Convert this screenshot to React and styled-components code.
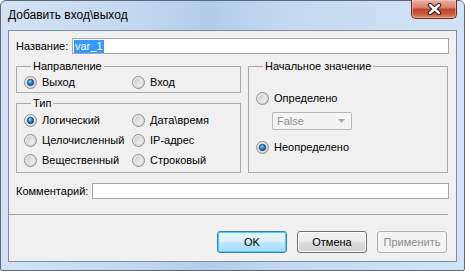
import React from 'react';
import styled, { createGlobalStyle } from 'styled-components';

const GlobalStyle = createGlobalStyle`
    html, body {
        margin: 0;
        padding: 0;
        background: #ffffff;
    }
    body {
        font-family: "Liberation Sans", Arial, sans-serif;
        font-size: 11px;
        color: #000000;
    }
`;

const Window = styled.div`
    box-sizing: border-box;
    width: 465px;
    height: 271px;
    display: flex;
    flex-direction: column;
    padding: 0 7px 8px 7px;
    border: 1px solid #5b6b7c;
    border-radius: 6px 6px 2px 2px;
    background: linear-gradient(90deg, #d3e3f4 0%, #c2d7ef 30%, #b2cce9 45%, #c4d9f0 62%, #d2e3f4 100%);
`;

const TitleBar = styled.div`
    height: 29px;
    display: flex;
    justify-content: space-between;
    flex-shrink: 0;
`;

const Title = styled.div`
    font-family: "Liberation Sans", Arial, sans-serif;
    font-size: 12px;
    line-height: 14px;
    padding-top: 7px;
    color: #000000;
`;

const CloseButton = styled.div`
    box-sizing: border-box;
    width: 46px;
    height: 19px;
    margin-top: -1px;
    display: grid;
    place-items: center;
    border: 1px solid #6d2a1e;
    border-top: none;
    border-radius: 0 0 5px 5px;
    background: linear-gradient(180deg, #eab0a3 0%, #d9806b 42%, #c4442b 52%, #c9533a 75%, #dc8a6a 100%);
    box-shadow: inset 0 0 0 1px rgba(255, 220, 210, 0.45);
`;

const Client = styled.div`
    flex: 1;
    box-sizing: border-box;
    display: flex;
    flex-direction: column;
    padding: 7px 7px 8px 7px;
    border: 1px solid #7b8ea4;
    background: #f0f0f0;
`;

const FieldRow = styled.div`
    display: flex;
    align-items: center;
    height: 16px;
    margin-top: ${(p) => p.$top || 0}px;
`;

const Label = styled.div`
    width: ${(p) => p.$width}px;
    flex-shrink: 0;
    line-height: 13px;
    white-space: nowrap;
`;

const TextInput = styled.div`
    flex: 1;
    box-sizing: border-box;
    height: 16px;
    display: flex;
    align-items: center;
    padding-left: 1px;
    border: 1px solid #a5a7aa;
    background: #ffffff;
`;

const Selected = styled.span`
    background: #3399ff;
    color: #ffffff;
    line-height: 13px;
    padding: 0 1px;
`;

const Groups = styled.div`
    display: grid;
    grid-template-columns: 225px 200px;
    column-gap: 7px;
    margin-top: 6px;
`;

const Column = styled.div`
    display: flex;
    flex-direction: column;
    gap: 4px;
`;

const GroupBox = styled.fieldset`
    margin: 0;
    min-width: 0;
    padding: ${(p) => p.$pad};
    border: 1px solid #a9a9a9;
    border-radius: 0;
`;

const Legend = styled.legend`
    margin-left: 7px;
    padding: 0 2px;
    line-height: 13px;
`;

const RadioGrid = styled.div`
    display: grid;
    grid-template-columns: 108px 1fr;
    row-gap: 7px;
`;

const RadioItem = styled.label`
    display: flex;
    align-items: center;
    gap: 5px;
    height: 13px;
    line-height: 13px;
    white-space: nowrap;
    margin-top: ${(p) => p.$top || 0}px;
`;

const Combo = styled.div`
    box-sizing: border-box;
    width: 80px;
    height: 18px;
    margin: 7px 0 0 16px;
    display: flex;
    align-items: center;
    justify-content: space-between;
    padding: 0 6px 0 4px;
    border: 1px solid #b8b8b8;
    border-radius: 2px;
    background: #f4f4f4;
    color: #8d8d8d;
`;

const Separator = styled.div`
    height: 1px;
    margin: 15px 1px 0 -7px;
    background: #a0a0a0;
`;

const ButtonBar = styled.div`
    display: flex;
    justify-content: flex-end;
    gap: 10px;
    margin-top: 16px;
    padding-right: 2px;
`;

const Button = styled.div`
    box-sizing: border-box;
    width: 70px;
    height: 22px;
    display: grid;
    place-items: center;
    border-radius: 3px;
    border: 1px solid ${(p) => (p.$variant === 'default' ? '#3c7fb1' : p.$variant === 'disabled' ? '#adb2b5' : '#707070')};
    color: ${(p) => (p.$variant === 'disabled' ? '#8c8c8c' : '#000000')};
    background: ${(p) =>
        p.$variant === 'default'
            ? 'linear-gradient(180deg, #eaf6fd 0%, #d9f0fc 48%, #bee6fd 52%, #a7d9f5 100%)'
            : p.$variant === 'disabled'
            ? '#f4f4f4'
            : 'linear-gradient(180deg, #f2f2f2 0%, #ebebeb 48%, #dddddd 52%, #cfcfcf 100%)'};
    box-shadow: ${(p) =>
        p.$variant === 'default'
            ? 'inset 0 0 0 1px #48d0f8'
            : p.$variant === 'disabled'
            ? 'none'
            : 'inset 0 0 0 1px #fcfcfc'};
`;

const CloseIcon = () => (
    <svg width="17" height="12" viewBox="0 0 17 12">
        <path d="M4 2 L13 10 M13 2 L4 10" stroke="#3b1812" strokeWidth="4.4" strokeLinecap="round" />
        <path d="M4 2 L13 10 M13 2 L4 10" stroke="#ffffff" strokeWidth="2.4" strokeLinecap="round" />
    </svg>
);

const Radio = ({ checked }) => (
    <svg width="13" height="13" viewBox="0 0 13 13" style={{ flexShrink: 0 }}>
        <defs>
            <linearGradient id="radioRing" x1="0" y1="0" x2="1" y2="1">
                <stop offset="0" stopColor="#f6f6f6" />
                <stop offset="1" stopColor="#c9c9c9" />
            </linearGradient>
            <linearGradient id="radioWell" x1="0" y1="0" x2="1" y2="1">
                <stop offset="0" stopColor="#cbcbcb" />
                <stop offset="1" stopColor="#f7f7f7" />
            </linearGradient>
            <radialGradient id="radioDot" cx="0.4" cy="0.35" r="0.7">
                <stop offset="0" stopColor="#a4dcff" />
                <stop offset="0.45" stopColor="#2f8ad8" />
                <stop offset="1" stopColor="#0b3f78" />
            </radialGradient>
        </defs>
        <circle cx="6.5" cy="6.5" r="6" fill="url(#radioRing)" stroke="#8e8f8f" strokeWidth="1" />
        <circle cx="6.5" cy="6.5" r="4.2" fill="url(#radioWell)" />
        {checked && <circle cx="6.5" cy="6.5" r="3.2" fill="url(#radioDot)" stroke="#1a4a7c" strokeWidth="0.8" />}
    </svg>
);

const Option = ({ checked, children, top }) => (
    <RadioItem $top={top}>
        <Radio checked={checked} />
        <span>{children}</span>
    </RadioItem>
);

export default function App() {
    return (
        <>
            <GlobalStyle />
            <Window>
                <TitleBar>
                    <Title>Добавить вход\выход</Title>
                    <CloseButton>
                        <CloseIcon />
                    </CloseButton>
                </TitleBar>
                <Client>
                    <FieldRow>
                        <Label $width={56}>Название:</Label>
                        <TextInput>
                            <Selected>var_1</Selected>
                        </TextInput>
                    </FieldRow>

                    <Groups>
                        <Column>
                            <GroupBox $pad="3px 7px 3px 7px">
                                <Legend>Направление</Legend>
                                <RadioGrid>
                                    <Option checked>Выход</Option>
                                    <Option>Вход</Option>
                                </RadioGrid>
                            </GroupBox>
                            <GroupBox $pad="4px 7px 5px 7px">
                                <Legend>Тип</Legend>
                                <RadioGrid>
                                    <Option checked>Логический</Option>
                                    <Option>Дата\время</Option>
                                    <Option>Целочисленный</Option>
                                    <Option>IP-адрес</Option>
                                    <Option>Вещественный</Option>
                                    <Option>Строковый</Option>
                                </RadioGrid>
                            </GroupBox>
                        </Column>
                        <GroupBox $pad="19px 7px 5px 7px">
                            <Legend>Начальное значение</Legend>
                            <Option>Определено</Option>
                            <Combo>
                                <span>False</span>
                                <svg width="7" height="4" viewBox="0 0 7 4">
                                    <path d="M0 0 H7 L3.5 4 Z" fill="#a8a8a8" />
                                </svg>
                            </Combo>
                            <Option checked top={11}>Неопределено</Option>
                        </GroupBox>
                    </Groups>

                    <FieldRow $top={10}>
                        <Label $width={76}>Комментарий:</Label>
                        <TextInput />
                    </FieldRow>

                    <Separator />

                    <ButtonBar>
                        <Button $variant="default">OK</Button>
                        <Button>Отмена</Button>
                        <Button $variant="disabled">Применить</Button>
                    </ButtonBar>
                </Client>
            </Window>
        </>
    );
}
